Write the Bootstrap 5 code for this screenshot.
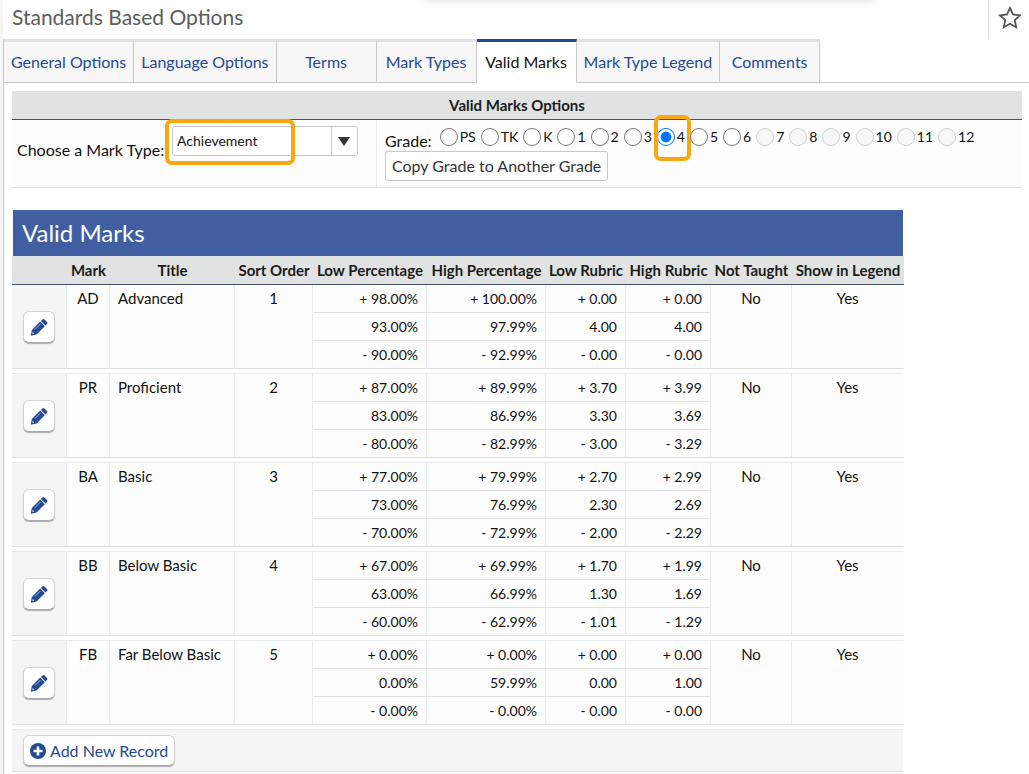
<!DOCTYPE html>
<html lang="en">
<head>
    <meta charset="utf-8">
    <meta name="viewport" content="width=device-width, initial-scale=1">
    <title>Standards Based Options</title>
    <link href="https://cdn.jsdelivr.net/npm/bootstrap@5.3.3/dist/css/bootstrap.min.css" rel="stylesheet">
    <script src="https://cdn.jsdelivr.net/npm/bootstrap@5.3.3/dist/js/bootstrap.bundle.min.js"></script>
    <style>
        :root {
            --brand: #234a96;
            --line: #c8c8c8;
            --soft: #e0e0e0;
            --cell: #e6edef;
            --head: #e1e3e2;
            --mark: #f9a80b;
        }
        body {
            font-family: Lato, "Liberation Sans", sans-serif;
            font-size: 16px;
            line-height: 20px;
            color: #111;
            background: #fff;
            border-left: 3px solid #f5f5f5;
            min-height: 100vh;
            overflow-x: hidden;
        }

        /* top bar */
        .page-top { height: 39px; }
        .page-top h1 { font-size: 21px; line-height: 34px; color: #5d5d5d; padding-left: 9px; }
        .fav-btn { width: 41px; border: 0; border-left: 1px solid #ddd; background: none; }
        .shade { top: -8px; left: 41%; width: 44%; height: 8px; box-shadow: 0 0 8px rgba(0, 0, 0, .15); }

        .page-main { border-left: 1px solid var(--line); min-height: calc(100vh - 39px); }

        /* tabs */
        .nav-tabs { border-bottom: 1px solid var(--line); }
        .nav-tabs .nav-link {
            min-width: 100px;
            margin-bottom: -1px;
            padding: 10px 7px;
            font-size: 16px;
            line-height: 20px;
            text-align: center;
            color: var(--brand);
            background: #f7f7f7;
            border: 0;
            border-top: 3px solid var(--head);
            border-right: 1px solid var(--line);
            border-bottom: 1px solid var(--line);
            border-radius: 0;
        }
        .nav-tabs .nav-link.active {
            color: #111;
            background: #fff;
            border-color: var(--brand) var(--line) #fff;
        }

        /* options */
        .opt-box { margin: 8px 7px 22px 8px; border-bottom: 1px solid var(--soft); background: #fdfdfd; }
        .opt-box h2 {
            font-size: 15px; line-height: 28px; font-weight: 700; color: #1c1c1c;
            background: var(--head); border-bottom: 1px solid #3f5272;
        }
        .opt-type { width: 365px; height: 67px; padding: 6px 18px 6px 5px; border-right: 1px solid var(--cell); }
        .opt-type label { padding-top: 14px; }
        .opt-grade { padding: 7px 8px 0; }
        .type-select {
            width: 186px;
            height: 30px;
            padding: 0 30px 0 4px;
            font-size: 14px;
            color: #111;
            border: 1px solid var(--line);
            border-radius: 3px;
            appearance: none;
            background: #fff url("data:image/svg+xml,%3Csvg xmlns='http://www.w3.org/2000/svg' width='26' height='28'%3E%3Cpath d='M.5 0v28' stroke='%23c8c8c8'/%3E%3Cpath d='M7 10h12l-6 9z' fill='%23333'/%3E%3C/svg%3E") no-repeat right center;
        }
        .callout { position: absolute; border: 4px solid var(--mark); border-radius: 7px; pointer-events: none; }
        .callout-type { inset: -7px auto auto -7px; width: 130px; height: 46px; }
        .callout-grade { inset: -12px -6px auto -3px; height: 46px; }
        .grade-row { height: 24px; }
        .grade-list { gap: 5px; }
        .grade-list label { font-size: 14px; }
        .grade-list input { width: 18px; height: 18px; margin: 0 2px 0 0; }
        .copy-btn {
            padding: 4px 6px; font-size: 16px; line-height: 20px; color: #333;
            background: #fff; border: 1px solid var(--line); border-radius: 3px;
        }

        /* marks table */
        .marks-wrap { margin-left: 8px; overflow-x: auto; }
        .marks { width: 892px; table-layout: fixed; border-collapse: separate; border-spacing: 0; }
        .marks caption {
            caption-side: top; padding: 0 9px; border-left: 1px solid #fff; border-right: 1px solid #fff;
            background: #415fa0; background-clip: padding-box;
            color: #fff; font-size: 24px; line-height: 46px;
        }
        .marks th {
            height: 29px; padding: 0; font-size: 15px; font-weight: 700; text-align: center; white-space: nowrap;
            color: #1c1c1c; background: var(--head); border-bottom: 1px solid #3f5272;
        }
        .marks td {
            height: 28px; padding: 0 8px; font-size: 15px; line-height: 27px; vertical-align: top;
            background: #fdfdfd; border-bottom: 1px solid var(--soft); border-right: 1px solid var(--cell);
        }
        .marks td:last-child { border-right-color: #fdfdfd; }
        .marks td.num { font-size: 14px; text-align: right; border-right-color: var(--cell); }
        .marks td.tool { padding: 0; text-align: center; vertical-align: middle; background: #f5f5f5; }
        .marks tbody + tbody::before, .marks tfoot::before { content: ""; display: block; height: 4px; }
        .marks tbody + tbody tr:first-child td, .marks tfoot td { border-top: 1px solid #e6eaec; }
        .marks tfoot td { padding: 5px 11px; background: #f5f5f5; }
        .tool-btn {
            background: #fff; color: var(--brand); border: 1px solid #d4d4d4; border-bottom-color: #aaa;
            border-radius: 6px; box-shadow: 0 1px 1px rgba(0, 0, 0, .3);
        }
        .edit-btn { width: 32px; height: 32px; padding: 0; line-height: 1; }
        .add-btn { height: 31px; padding: 0 6px; font-size: 16px; line-height: 20px; vertical-align: top; }
    </style>
</head>
<body>
    <header class="page-top d-flex justify-content-between position-relative">
        <div class="shade position-absolute"></div>
        <h1 class="m-0 fw-normal">Standards Based Options</h1>
        <button type="button" class="fav-btn px-0 pt-0 pb-1" aria-label="Add to favorites">
            <svg width="24" height="24" viewBox="0 0 24 24" class="d-block mx-auto" fill="none" stroke="#555" stroke-width="1.8">
                <path d="M13 2l3 6.500 7 .8-5.200 4.800 1.400 7.200-6.200-3.500-6.200 3.500 1.400-7.200L3 9.300l7-.8z"/>
            </svg>
        </button>
    </header>

    <main class="page-main">
        <ul class="nav nav-tabs">
            <li class="nav-item"><a class="nav-link" href="#">General Options</a></li>
            <li class="nav-item"><a class="nav-link" href="#">Language Options</a></li>
            <li class="nav-item"><a class="nav-link" href="#">Terms</a></li>
            <li class="nav-item"><a class="nav-link" href="#">Mark Types</a></li>
            <li class="nav-item"><a class="nav-link active" href="#" aria-current="page">Valid Marks</a></li>
            <li class="nav-item"><a class="nav-link" href="#">Mark Type Legend</a></li>
            <li class="nav-item"><a class="nav-link" href="#">Comments</a></li>
        </ul>

        <section class="opt-box">
            <h2 class="m-0 text-center">Valid Marks Options</h2>
            <div class="d-flex">
                <div class="opt-type d-flex flex-shrink-0">
                    <label for="markType" class="flex-grow-1 text-nowrap">Choose a Mark Type:</label>
                    <div class="position-relative">
                        <select id="markType" class="type-select">
                            <option>Achievement</option>
                        </select>
                        <span class="callout callout-type"></span>
                    </div>
                </div>
                <div class="opt-grade">
                    <div class="grade-row d-flex align-items-end">
                        <span class="me-2">Grade:</span>
                        <div id="grades" class="grade-list d-flex align-self-start" role="radiogroup" aria-label="Grade"></div>
                    </div>
                    <button type="button" class="copy-btn">Copy Grade to Another Grade</button>
                </div>
            </div>
        </section>

        <div class="marks-wrap">
            <table id="marks" class="marks">
                <caption>Valid Marks</caption>
                <colgroup>
                    <col style="width:55px"><col style="width:43px"><col style="width:125px"><col style="width:78px">
                    <col style="width:114px"><col style="width:119px"><col style="width:80px"><col style="width:85px">
                    <col style="width:81px"><col style="width:112px">
                </colgroup>
                <thead>
                    <tr>
                        <th></th>
                        <th>Mark</th>
                        <th>Title</th>
                        <th>Sort Order</th>
                        <th>Low Percentage</th>
                        <th>High Percentage</th>
                        <th>Low Rubric</th>
                        <th>High Rubric</th>
                        <th>Not Taught</th>
                        <th>Show in Legend</th>
                    </tr>
                </thead>
                <tfoot>
                    <tr>
                        <td colspan="10">
                            <button type="button" class="tool-btn add-btn d-inline-flex align-items-center gap-1">
                                <svg width="16" height="16" viewBox="0 0 16 16">
                                    <circle cx="8" cy="8" r="8" fill="#234a96"/>
                                    <path d="M8 3.5v9M3.5 8h9" stroke="#fff" stroke-width="2.6"/>
                                </svg>
                                Add New Record
                            </button>
                        </td>
                    </tr>
                </tfoot>
            </table>
        </div>
    </main>
</body>
</html>
<script>
    // Grades 7 and up are not offered at this school
    var grades = ["PS", "TK", "K", "1", "2", "3", "4", "5", "6", "7", "8", "9", "10", "11", "12"];
    var selectedGrade = "4";

    var marks = [
        {
            mark: "AD", title: "Advanced",
            values: [
                ["+ 98.00%", "+ 100.00%", "+ 0.00", "+ 0.00"],
                ["93.00%", "97.99%", "4.00", "4.00"],
                ["- 90.00%", "- 92.99%", "- 0.00", "- 0.00"]
            ]
        },
        {
            mark: "PR", title: "Proficient",
            values: [
                ["+ 87.00%", "+ 89.99%", "+ 3.70", "+ 3.99"],
                ["83.00%", "86.99%", "3.30", "3.69"],
                ["- 80.00%", "- 82.99%", "- 3.00", "- 3.29"]
            ]
        },
        {
            mark: "BA", title: "Basic",
            values: [
                ["+ 77.00%", "+ 79.99%", "+ 2.70", "+ 2.99"],
                ["73.00%", "76.99%", "2.30", "2.69"],
                ["- 70.00%", "- 72.99%", "- 2.00", "- 2.29"]
            ]
        },
        {
            mark: "BB", title: "Below Basic",
            values: [
                ["+ 67.00%", "+ 69.99%", "+ 1.70", "+ 1.99"],
                ["63.00%", "66.99%", "1.30", "1.69"],
                ["- 60.00%", "- 62.99%", "- 1.01", "- 1.29"]
            ]
        },
        {
            mark: "FB", title: "Far Below Basic",
            values: [
                ["+ 0.00%", "+ 0.00%", "+ 0.00", "+ 0.00"],
                ["0.00%", "59.99%", "0.00", "1.00"],
                ["- 0.00%", "- 0.00%", "- 0.00", "- 0.00"]
            ]
        }
    ];

    var pencil = `<svg width="20" height="20" viewBox="0 0 20 20" fill="#234a96">
        <path d="M13.400 2.400q1-1 2 0l2.600 2.600q1 1 0 2l-1.500 1.500-4.600-4.600z"/>
        <path d="M11.200 4.600l4.600 4.600-8.300 8.300-5.700 1.200 1-5.800z"/>
        <path d="M11.500 7L6 12.500" stroke="#fff" stroke-width=".6"/>
        <path d="M3.600 15l1.600 1.600-1.200.3-.7-.7z" fill="#fff"/>
    </svg>`;

    function drawGrades() {
        document.getElementById("grades").innerHTML = grades.map(function (g, i) {
            var checked = g === selectedGrade;
            return `<div class="d-flex align-items-center position-relative">
                <input type="radio" name="grade" id="grade${g}" value="${g}" ${checked ? "checked" : ""} ${i > 8 ? "disabled" : ""}>
                <label for="grade${g}">${g}</label>
                ${checked ? '<span class="callout callout-grade"></span>' : ""}
            </div>`;
        }).join("");
    }

    function drawMarks() {
        var foot = document.querySelector("#marks tfoot");
        marks.forEach(function (m, i) {
            var rows = m.values.map(function (v, n) {
                var nums = v.map(function (x) { return `<td class="num">${x}</td>`; }).join("");
                if (n > 0) {
                    return `<tr>${nums}</tr>`;
                }
                return `<tr>
                    <td rowspan="3" class="tool"><button type="button" class="tool-btn edit-btn" aria-label="Edit ${m.title}">${pencil}</button></td>
                    <td rowspan="3" class="text-center">${m.mark}</td>
                    <td rowspan="3">${m.title}</td>
                    <td rowspan="3" class="text-center">${i + 1}</td>
                    ${nums}
                    <td rowspan="3" class="text-center">No</td>
                    <td rowspan="3" class="text-center">Yes</td>
                </tr>`;
            });
            foot.insertAdjacentHTML("beforebegin", `<tbody>${rows.join("")}</tbody>`);
        });
    }

    drawGrades();
    drawMarks();
</script>
